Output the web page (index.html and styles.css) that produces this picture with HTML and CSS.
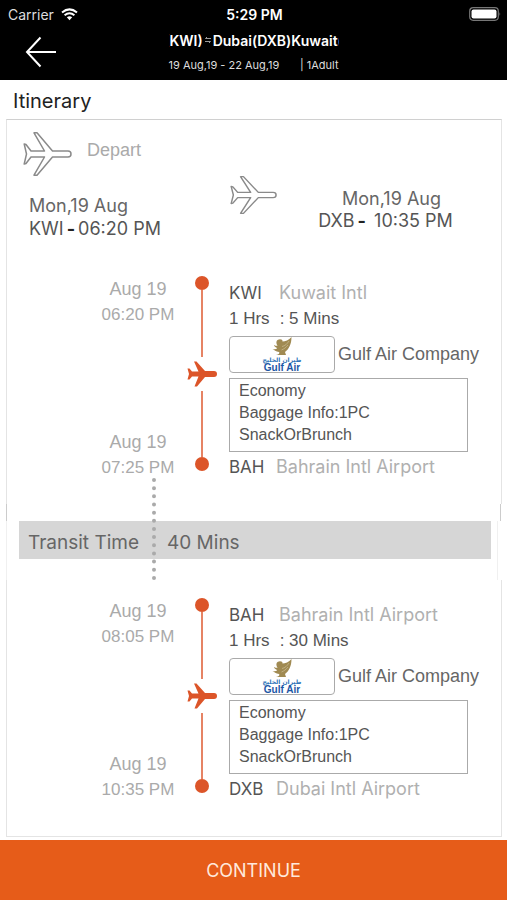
FILE: index.html
```
<!DOCTYPE html>
<html lang="en">
<head>
    <meta charset="UTF-8">
    <meta name="viewport" content="width=device-width, initial-scale=1.0">
    <title>Itinerary</title>
    <link rel="stylesheet" href="styles.css">
</head>
<body>
    <!-- shared drawings -->
    <svg class="defs" width="0" height="0" aria-hidden="true">
        <symbol id="plane-outline" viewBox="0 0 50 44">
            <path d="M29.5 19H45a3 3 0 0 1 0 6H29.5L14 43.2H11L21.5 25H8L3 31.5 1.2 32 3.5 22 1.2 12 3 12.5 8 19H21.5L11 .8H14Z" fill="none" stroke="#8a8a8a" stroke-width="1.5" stroke-linejoin="round"/>
        </symbol>
        <symbol id="plane-solid" viewBox="0 0 30 26">
            <path d="M18 10H27a3 3 0 0 1 0 6H18L10 25.5H7.5L11.5 15.5H5L2.500 18.5H.5L2 13 .5 7.500H2.500L5 10.500H11.5L7 .5H9.500Z" fill="#dc5529"/>
        </symbol>
        <symbol id="falcon" viewBox="0 0 22 19">
            <path d="M20.500 0C20.500 7 18 12 14 15L15 18H5C8 17.500 9 16 8 15 5 14.500 3 13 1.500 12 5 12.500 6 12 6 11 4 10 3 9 3 8 5 9 6 9 6.500 8.500 5 7 5 4 6.500 3 9 1.500 12 2.500 11.500 4.500 14 4.500 18 3 20.500 0Z" fill="#a08a52"/>
            <path d="M11 9.500C14 9 16 7 18 4M10.500 13C13 12 15 10.500 17 8" fill="none" stroke="#cdbf94" stroke-width=".7"/>
        </symbol>
    </svg>

    <header class="topbar">
        <div class="status">
            <span class="carrier">Carrier
                <svg width="17" height="13" viewBox="0 0 17 13" aria-hidden="true">
                    <path d="M1 4.5Q8.5-1.8 16 4.5M3.6 7.2Q8.5 3.2 13.4 7.2" fill="none" stroke="#fff" stroke-width="2"/>
                    <path d="M5.8 9.3Q8.5 7.3 11.2 9.3L8.5 12.3Z" fill="#fff"/>
                </svg>
            </span>
            <span class="clock">5:29 PM</span>
            <svg class="battery" width="32" height="14" viewBox="0 0 32 14" aria-hidden="true">
                <rect x=".7" y=".7" width="28.6" height="12.6" rx="3.5" fill="none" stroke="#777" stroke-width="1.2"/>
                <rect x="2.5" y="2.5" width="25" height="9" rx="2" fill="#fff"/>
                <path d="M30.5 5q1.5 2 0 4Z" fill="#777"/>
            </svg>
        </div>
        <div class="navbar">
            <button class="back" type="button" aria-label="Back">
                <svg width="32" height="32" viewBox="0 0 32 32" aria-hidden="true">
                    <path d="M15.5 1.5L2 16 15.5 30.5M2 16H31" fill="none" stroke="#fff" stroke-width="2"/>
                </svg>
            </button>
            <div class="trip">
                <div class="route">
                    <span>(KWI)</span>
                    <svg width="8" height="8" viewBox="0 0 8 8" aria-hidden="true">
                        <path d="M7 2.5H1.5L3 1M1 5.5H6.5L5 7" fill="none" stroke="#aaa" stroke-width=".9"/>
                    </svg>
                    <span>Dubai(DXB)Kuwait(</span>
                </div>
                <div class="dates"><span>19 Aug,19 - 22 Aug,19</span><span>| 1Adult</span></div>
            </div>
        </div>
    </header>

    <main class="content">
        <h1>Itinerary</h1>

        <section class="block first">
            <div class="depart">
                <svg width="50" height="44" aria-hidden="true"><use href="#plane-outline"/></svg>
                <h2>Depart</h2>
            </div>
            <div class="summary">
                <div class="from">
                    <div>Mon,19 Aug</div>
                    <div class="strong">KWI<b>-</b>06:20 PM</div>
                </div>
                <svg width="48" height="38" viewBox="0 0 50 44" preserveAspectRatio="none" aria-hidden="true"><use href="#plane-outline"/></svg>
                <div class="to">
                    <div class="to-day">Mon,19 Aug</div>
                    <div class="strong">DXB<b>-</b> 10:35 PM</div>
                </div>
            </div>

            <div class="leg">
                <div class="times">
                    <div><span class="day">Aug 19</span><span>06:20 PM</span></div>
                    <div><span class="day">Aug 19</span><span>07:25 PM</span></div>
                </div>
                <div class="track">
                    <i class="dot"></i>
                    <i class="line"></i>
                    <svg width="30" height="26" aria-hidden="true"><use href="#plane-solid"/></svg>
                    <i class="line"></i>
                    <i class="dot"></i>
                </div>
                <div class="details">
                    <div class="airport"><span class="code">KWI</span><span>Kuwait Intl</span></div>
                    <div class="duration"><span>1 Hrs</span><span>: 5 Mins</span></div>
                    <div class="airline">
                        <div class="logo">
                            <svg width="22" height="19" aria-hidden="true"><use href="#falcon"/></svg>
                            <span class="logo-ar" lang="ar">طيران الخليج</span>
                            <span class="logo-en">Gulf Air</span>
                        </div>
                        <span>Gulf Air Company</span>
                    </div>
                    <div class="info">
                        <div>Economy</div>
                        <div>Baggage Info:1PC</div>
                        <div>SnackOrBrunch</div>
                    </div>
                    <div class="airport arrival"><span class="code">BAH</span><span>Bahrain Intl Airport</span></div>
                </div>
            </div>
        </section>

        <section class="transit">
            <div class="edge"></div>
            <div class="transit-body">
                <div class="transit-bar"><span>Transit Time</span><span>40 Mins</span></div>
            </div>
        </section>

        <section class="block last">
            <div class="leg">
                <div class="times">
                    <div><span class="day">Aug 19</span><span>08:05 PM</span></div>
                    <div><span class="day">Aug 19</span><span>10:35 PM</span></div>
                </div>
                <div class="track">
                    <i class="dot"></i>
                    <i class="line"></i>
                    <svg width="30" height="26" aria-hidden="true"><use href="#plane-solid"/></svg>
                    <i class="line"></i>
                    <i class="dot"></i>
                </div>
                <div class="details">
                    <div class="airport"><span class="code">BAH</span><span>Bahrain Intl Airport</span></div>
                    <div class="duration"><span>1 Hrs</span><span>: 30 Mins</span></div>
                    <div class="airline">
                        <div class="logo">
                            <svg width="22" height="19" aria-hidden="true"><use href="#falcon"/></svg>
                            <span class="logo-ar" lang="ar">طيران الخليج</span>
                            <span class="logo-en">Gulf Air</span>
                        </div>
                        <span>Gulf Air Company</span>
                    </div>
                    <div class="info">
                        <div>Economy</div>
                        <div>Baggage Info:1PC</div>
                        <div>SnackOrBrunch</div>
                    </div>
                    <div class="airport arrival"><span class="code">DXB</span><span>Dubai Intl Airport</span></div>
                </div>
            </div>
        </section>
    </main>

    <button class="continue" type="button">CONTINUE</button>
</body>
</html>
```
FILE: styles.css
```
* {
    box-sizing: border-box;
}
body {
    margin: 0;
    min-height: 100vh;
    display: flex;
    flex-direction: column;
    background: #fff;
    color: #666;
    font-family: Inter, "Liberation Sans", sans-serif;
    font-size: 17px;
}
svg {
    display: block;
    flex: none;
}
.defs {
    position: absolute;
}
button {
    border: none;
    padding: 0;
    cursor: pointer;
}

/* black bar */
.topbar {
    height: 80px;
    background: #000;
    color: #fff;
}
.status {
    display: grid;
    grid-template-columns: 1fr auto 1fr;
    align-items: center;
    height: 28px;
    padding: 0 6px 0 8px;
    font-size: 14px;
}
.carrier {
    display: flex;
    align-items: center;
    gap: 7px;
    color: #ddd;
}
.clock {
    font-weight: 600;
}
.battery {
    justify-self: end;
}
.navbar {
    display: grid;
    grid-template-columns: 1fr 170px 1fr;
}
.back {
    width: 32px;
    height: 32px;
    margin: 8px 0 0 25px;
    background: none;
}
.route {
    display: flex;
    justify-content: center;
    align-items: center;
    gap: 1px;
    height: 24px;
    overflow: hidden;
    white-space: nowrap;
    font-size: 14px;
    font-weight: 600;
}
.dates {
    display: flex;
    justify-content: space-between;
    line-height: 26px;
    white-space: nowrap;
    color: #ddd;
    font-size: 11px;
}

/* itinerary */
.content {
    flex: 1;
    display: flex;
    flex-direction: column;
    padding: 0 5px 3px 6px;
}
h1 {
    margin: 0;
    padding: 3px 7px 0;
    line-height: 36px;
    font-size: 20px;
    font-weight: 400;
    color: #222;
}
.block {
    border: solid #e4e4e4;
    border-width: 0 1px;
}
.block.first {
    border-top: 1px solid #d0d0d0;
    padding: 12px 0 24px;
}
.block.last {
    flex: 1;
    border-bottom: 1px solid #e4e4e4;
    padding: 18px 0 24px;
}
.depart {
    display: flex;
    gap: 14px;
    padding-left: 16px;
}
h2 {
    margin: 0;
    font: 400 18px/36px "Liberation Sans", sans-serif;
    color: #aaa;
}
.summary {
    display: grid;
    grid-template-columns: 201px 48px 1fr;
    height: 100px;
    padding-left: 22px;
    font-size: 18px;
    line-height: 23px;
}
.summary b {
    margin: 0 3px;
    color: #222;
}
.strong {
    color: #555;
}
.from {
    padding-top: 18px;
}
.to {
    padding: 12px 8px 0 0;
    text-align: center;
    line-height: 22px;
}
.to-day {
    padding-left: 12px;
}

.leg {
    display: grid;
    grid-template-columns: 74px 30px 1fr;
    column-gap: 12px;
    padding-left: 94px;
}
.times {
    display: flex;
    flex-direction: column;
    justify-content: space-between;
    padding-top: 1px;
    text-align: center;
    line-height: 25px;
    color: #aaa;
    font-family: "Liberation Sans", sans-serif;
}
.times span {
    display: block;
}
.times .day {
    font-size: 18px;
}
.track {
    display: flex;
    flex-direction: column;
    align-items: center;
    padding-bottom: 9px;
}
.track svg {
    margin: 4px 0;
}
.dot {
    width: 14px;
    height: 14px;
    border-radius: 50%;
    background: #dc5529;
}
.line {
    flex: 1;
    width: 2px;
    background: #e68364;
}
.details {
    padding-top: 4px;
    font-family: "Liberation Sans", sans-serif;
}
.airport {
    display: flex;
    gap: 14px;
    line-height: 26px;
    color: #b0b0b0;
    font-family: Inter, "Liberation Sans", sans-serif;
    font-size: 18px;
}
.airport.arrival {
    gap: 11px;
}
.code {
    min-width: 36px;
    color: #555;
    font-size: 17px;
}
.duration {
    display: flex;
    gap: 10px;
    line-height: 26px;
    color: #555;
}
.airline {
    display: flex;
    align-items: center;
    gap: 3px;
    margin: 4px 0 5px;
    font-size: 18px;
}
.logo {
    display: flex;
    flex-direction: column;
    align-items: center;
    width: 106px;
    height: 37px;
    border: 1px solid #aaa;
    border-radius: 4px;
    overflow: hidden;
    color: #1c56a5;
    font-weight: 700;
}
.logo-ar {
    line-height: 7px;
    font-family: "DejaVu Sans", sans-serif;
    font-size: 6px;
    color: #2f74b8;
}
.logo-en {
    line-height: 9px;
    font-size: 10px;
}
.info {
    width: 239px;
    margin-bottom: 2px;
    padding: 1px 9px 5px;
    border: 1px solid #aaa;
    line-height: 22px;
    font-size: 16px;
    color: #555;
}

/* stop between two legs */
.transit {
    position: relative;
}
.transit::before {
    content: "";
    position: absolute;
    top: -26px;
    bottom: 0;
    left: 146px;
    border-left: 4px dotted #aaa;
}
.edge {
    height: 17px;
    margin-right: 1px;
    border: solid #ccc;
    border-width: 0 1px;
}
.transit-body {
    margin-right: 4px;
    padding: 0 6px 21px 12px;
    border: solid #f0f0f0;
    border-width: 0 1px;
}
.transit-bar {
    display: flex;
    gap: 28px;
    height: 38px;
    padding: 3px 9px 0;
    background: #d6d6d6;
    line-height: 38px;
    font-size: 19px;
}

.continue {
    height: 60px;
    background: #e65c19;
    color: #ffe9dc;
    font: 400 18px Inter, "Liberation Sans", sans-serif;
}
```
